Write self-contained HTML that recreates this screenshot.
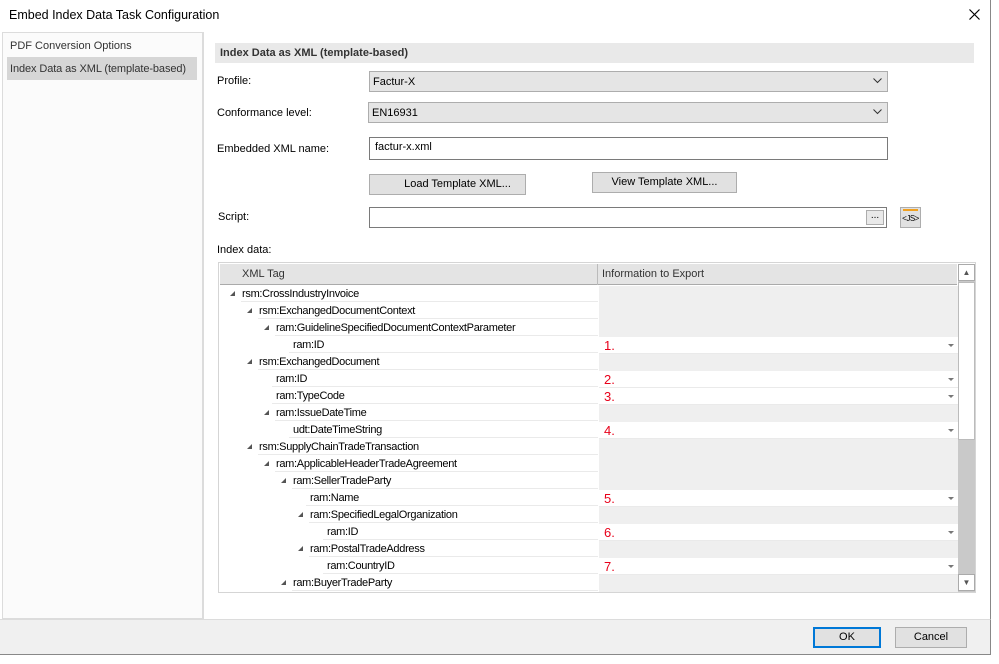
<!DOCTYPE html>
<html><head><style>
*{box-sizing:border-box;margin:0;padding:0}
body{width:999px;height:664px;background:#fff;font-family:"Liberation Sans",sans-serif;font-size:11px;color:#000;position:relative;overflow:hidden}
.a{position:absolute}
.lbl{position:absolute;font-size:11px}
.combo{position:absolute;background:#e5e5e5;border:1px solid #adadad;font-size:11px;padding:4px 3px}
.combo svg{position:absolute;right:5px;top:6px}
.btn{position:absolute;background:#e1e1e1;border:1px solid #adadad;font-size:11px;text-align:center;line-height:18px}
.row{position:absolute;left:0;height:17px;width:738px}
.row .t{position:absolute;top:0;height:16px;line-height:16px;font-size:11px;letter-spacing:-0.3px;border-bottom:1px solid #eaeaea;background:#fff}
.row .v{position:absolute;left:379px;width:359px;top:0;height:17px;background:#efefef}
.row .v.w{background:#fff;border-bottom:1px solid #eaeaea}
.row .n{position:absolute;left:5px;top:1px;color:#e8001a;font-size:13px}
.row .dd{position:absolute;right:4px;top:7px;width:0;height:0;border-left:3px solid transparent;border-right:3px solid transparent;border-top:3px solid #777}
.arr{position:absolute;top:5px;width:0;height:0;border-left:5px solid transparent;border-bottom:5px solid #555}
</style></head><body>
<div class="a" style="left:0;top:0;width:991px;height:655px;border:1px solid #888;border-top:none;border-left:none;background:#fff"></div>
<div class="a" style="left:9px;top:8px;font-size:12.5px">Embed Index Data Task Configuration</div>
<svg class="a" style="left:969px;top:9px" width="11" height="11"><path d="M0.5 0.5L10.5 10.5M10.5 0.5L0.5 10.5" stroke="#000" stroke-width="1.2"/></svg>
<!-- left panel -->
<div class="a" style="left:2px;top:32px;width:202px;height:587px;background:#fbfbfb;border:1px solid #dcdcdc;border-right:2px solid #dcdcdc"></div>
<div class="a" style="left:10px;top:40px;font-size:11px;color:#333">PDF Conversion Options</div>
<div class="a" style="left:7px;top:57px;width:190px;height:23px;background:#d6d6d6"></div>
<div class="a" style="left:10px;top:63px;font-size:11px;color:#333;letter-spacing:-0.1px">Index Data as XML (template-based)</div>
<!-- header -->
<div class="a" style="left:215px;top:43px;width:759px;height:20px;background:#e9e9e9"></div>
<div class="a" style="left:220px;top:47px;font-weight:bold;color:#333;font-size:11px">Index Data as XML (template-based)</div>
<div class="lbl" style="left:217px;top:75px">Profile:</div>
<div class="combo" style="left:369px;top:71px;width:519px;height:21px">Factur-X<svg width="9" height="6"><path d="M0.5 0.5L4.5 4.5L8.5 0.5" stroke="#333" fill="none"/></svg></div>
<div class="lbl" style="left:217px;top:107px">Conformance level:</div>
<div class="combo" style="left:368px;top:102px;width:520px;height:21px">EN16931<svg width="9" height="6"><path d="M0.5 0.5L4.5 4.5L8.5 0.5" stroke="#333" fill="none"/></svg></div>
<div class="lbl" style="left:217px;top:143px">Embedded XML name:</div>
<div class="a" style="left:369px;top:137px;width:519px;height:23px;border:1px solid #7a7a7a;padding:3px 5px;font-size:11px">factur-x.xml</div>
<div class="btn" style="left:369px;top:174px;width:157px;height:21px;padding-left:20px">Load Template XML...</div>
<div class="btn" style="left:592px;top:172px;width:145px;height:21px">View Template XML...</div>
<div class="lbl" style="left:218px;top:211px">Script:</div>
<div class="a" style="left:369px;top:207px;width:518px;height:21px;border:1px solid #7a7a7a"></div>
<div class="btn" style="left:866px;top:210px;width:18px;height:15px;line-height:10px;font-size:10px;background:#e9e9e9">...</div>
<div class="a" style="left:900px;top:207px;width:21px;height:21px;background:#e1e1e1;border:1px solid #adadad;font-size:8px;text-align:center;line-height:22px;letter-spacing:-0.5px">&lt;JS&gt;<div class="a" style="left:2px;top:1px;width:15px;height:2px;background:#f0a020"></div></div>
<div class="lbl" style="left:217px;top:244px">Index data:</div>
<!-- grid -->
<div class="a" style="left:218px;top:262px;width:758px;height:331px;border:1px solid #d5d5d5;background:#fff;overflow:hidden">
<div class="a" style="left:1px;top:1px;width:737px;height:21px;background:#e4e4e4;border-bottom:1px solid #aaa"></div>
<div class="a" style="left:23px;top:5px;color:#333">XML Tag</div>
<div class="a" style="left:378px;top:1px;width:1px;height:21px;background:#bbb"></div>
<div class="a" style="left:383px;top:5px;color:#333">Information to Export</div>
<div class="a" style="left:739px;top:1px;width:17px;height:328px;background:#c9c9c9"></div>
<div class="a" style="left:739px;top:1px;width:17px;height:17px;background:#fff;border:1px solid #aaa;font-size:8px;text-align:center;line-height:15px;color:#555">▲</div>
<div class="a" style="left:739px;top:19px;width:17px;height:158px;background:#fff;border:1px solid #bbb"></div>
<div class="a" style="left:739px;top:311px;width:17px;height:17px;background:#fff;border:1px solid #aaa;font-size:8px;text-align:center;line-height:15px;color:#555">▼</div>
<div id="rows" class="a" style="left:1px;top:23px;width:738px;height:306px"></div>
</div>
<!-- bottom -->
<div class="a" style="left:0;top:619px;width:991px;height:36px;background:#f0f0f0;border-top:1px solid #dcdcdc;border-bottom:1px solid #888;border-right:1px solid #888"></div>
<div class="btn" style="left:813px;top:627px;width:68px;height:21px;border:2px solid #0078d7;line-height:17px">OK</div>
<div class="btn" style="left:895px;top:627px;width:72px;height:21px">Cancel</div>
<script>
var d=[[0,"rsm:CrossIndustryInvoice",1],[1,"rsm:ExchangedDocumentContext",1],[2,"ram:GuidelineSpecifiedDocumentContextParameter",1],[3,"ram:ID",0,"1."],[1,"rsm:ExchangedDocument",1],[2,"ram:ID",0,"2."],[2,"ram:TypeCode",0,"3."],[2,"ram:IssueDateTime",1],[3,"udt:DateTimeString",0,"4."],[1,"rsm:SupplyChainTradeTransaction",1],[2,"ram:ApplicableHeaderTradeAgreement",1],[3,"ram:SellerTradeParty",1],[4,"ram:Name",0,"5."],[4,"ram:SpecifiedLegalOrganization",1],[5,"ram:ID",0,"6."],[4,"ram:PostalTradeAddress",1],[5,"ram:CountryID",0,"7."],[3,"ram:BuyerTradeParty",1]];
var h="";d.forEach(function(r,i){var x=22+17*r[0];
h+='<div class="row" style="top:'+(i*17)+'px">';
if(r[2])h+='<div class="arr" style="left:'+(x-12)+'px"></div>';
h+='<div class="t" style="left:'+(r[2]?x-1:x-4)+'px;width:'+(378-(r[2]?x-1:x-4))+'px;padding-left:'+(r[2]?1:4)+'px">'+r[1]+'</div>';
h+=r[3]?'<div class="v w"><span class="n">'+r[3]+'</span><span class="dd"></span></div>':'<div class="v"></div>';
h+='</div>';});
document.getElementById("rows").innerHTML=h;
</script>
</body></html>
